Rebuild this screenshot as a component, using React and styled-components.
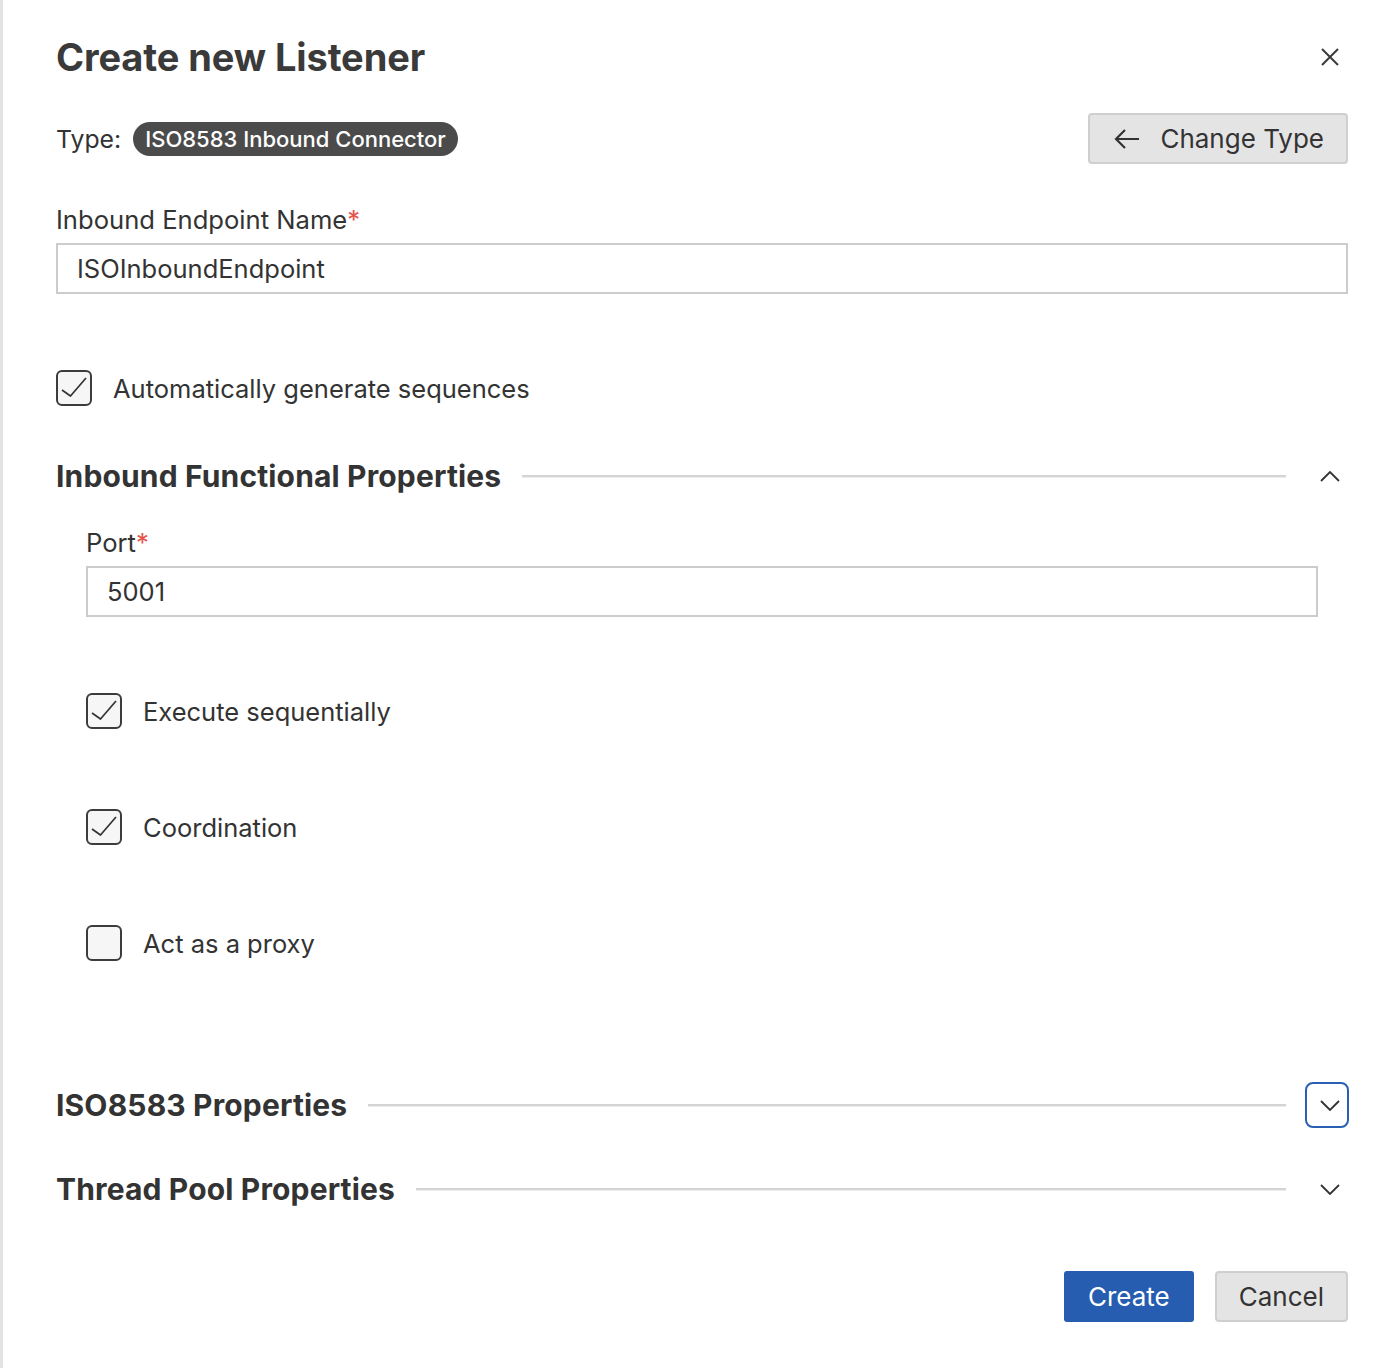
import React from "react";
import styled, { createGlobalStyle } from "styled-components";

const GlobalStyle = createGlobalStyle`
  html, body {
    margin: 0;
    padding: 0;
    background: #ffffff;
  }
  body {
    font-family: Inter, "Noto Sans", "Liberation Sans", sans-serif;
    color: #333333;
  }
  * {
    box-sizing: border-box;
  }
`;

function CloseIcon() {
  return (
    <svg width="20" height="20" viewBox="0 0 20 20" fill="none">
      <path d="M2 2 L18 18 M18 2 L2 18" stroke="#3a3a3a" strokeWidth="2" />
    </svg>
  );
}

function ArrowLeftIcon() {
  return (
    <svg width="26" height="22" viewBox="0 0 26 22" fill="none">
      <path
        d="M25 11 H2 M11 2 L2 11 L11 20"
        stroke="#333"
        strokeWidth="2.2"
        strokeLinejoin="miter"
      />
    </svg>
  );
}

function Chevron({ up }) {
  return (
    <svg width="20" height="11" viewBox="0 0 20 11" fill="none">
      <path
        d={up ? "M1 10 L10 1 L19 10" : "M1 1 L10 10 L19 1"}
        stroke="#333"
        strokeWidth="1.8"
      />
    </svg>
  );
}

function CheckMark() {
  return (
    <svg width="32" height="32" viewBox="0 0 32 32" fill="none">
      <path
        d="M4 18 L12.5 24 L28 6"
        stroke="#333"
        strokeWidth="1.7"
        strokeLinejoin="round"
      />
    </svg>
  );
}

function Checkbox({ label, checked, top }) {
  return (
    <CheckRow $top={top}>
      <Box>{checked && <CheckMark />}</Box>
      <CheckLabel>{label}</CheckLabel>
    </CheckRow>
  );
}

function Section({ title, open, focused, top, children }) {
  return (
    <>
      <SectionHeader $top={top}>
        <SectionTitle>{title}</SectionTitle>
        <Rule />
        <Toggle $focused={focused}>
          <Chevron up={open} />
        </Toggle>
      </SectionHeader>
      {open && <SectionBody>{children}</SectionBody>}
    </>
  );
}

function App() {
  return (
    <Panel>
      <GlobalStyle />
      <HeaderRow>
        <Title>Create new Listener</Title>
        <CloseButton>
          <CloseIcon />
        </CloseButton>
      </HeaderRow>

      <TypeRow>
        <TypeLabel>Type:</TypeLabel>
        <Chip>ISO8583 Inbound Connector</Chip>
        <Spacer />
        <SecondaryButton $wide>
          <ArrowLeftIcon />
          Change Type
        </SecondaryButton>
      </TypeRow>

      <Field $top={41}>
        <Label>
          Inbound Endpoint Name<Required>*</Required>
        </Label>
        <Input defaultValue="ISOInboundEndpoint" />
      </Field>

      <Checkbox label="Automatically generate sequences" checked top={76} />

      <Section title="Inbound Functional Properties" open top={47}>
        <Field $top={29}>
          <Label>
            Port<Required>*</Required>
          </Label>
          <Input defaultValue="5001" />
        </Field>
        <Checkbox label="Execute sequentially" checked top={76} />
        <Checkbox label="Coordination" checked top={80} />
        <Checkbox label="Act as a proxy" top={80} />
      </Section>

      <Section title="ISO8583 Properties" focused top={121} />
      <Section title="Thread Pool Properties" top={38} />

      <Footer>
        <PrimaryButton>Create</PrimaryButton>
        <SecondaryButton>Cancel</SecondaryButton>
      </Footer>
    </Panel>
  );
}

const Panel = styled.div`
  min-height: 1368px;
  border-left: 3px solid #e3e3e3;
  padding: 33px 44px 40px 53px;
  display: flex;
  flex-direction: column;
`;

const HeaderRow = styled.div`
  display: flex;
  align-items: center;
  justify-content: space-between;
  height: 48px;
`;

const Title = styled.h1`
  margin: 0;
  font-size: 38px;
  font-weight: 700;
  letter-spacing: -0.1px;
  color: #3a3a3a;
`;

const CloseButton = styled.div`
  width: 36px;
  height: 36px;
  display: flex;
  align-items: center;
  justify-content: center;
`;

const TypeRow = styled.div`
  display: flex;
  align-items: center;
  margin-top: 32px;
  height: 51px;
`;

const TypeLabel = styled.span`
  font-size: 24.8px;
  color: #333;
  margin-right: 12px;
`;

const Chip = styled.span`
  background: #4b4b4b;
  color: #ffffff;
  font-size: 22px;
  font-weight: 500;
  height: 34px;
  line-height: 34px;
  padding: 0 12px;
  border-radius: 17px;
`;

const Spacer = styled.div`
  flex: 1;
`;

const SecondaryButton = styled.button`
  display: flex;
  align-items: center;
  justify-content: center;
  gap: 20px;
  height: 51px;
  padding: ${(p) => (p.$wide ? "0 22px 0 24px" : "0 22px")};
  background: #e4e4e4;
  border: 2px solid #cfcfcf;
  border-radius: 4px;
  font-family: inherit;
  font-size: 26px;
  color: #333;
`;

const PrimaryButton = styled.button`
  height: 51px;
  padding: 0 24px;
  background: #275db0;
  border: none;
  border-radius: 3px;
  font-family: inherit;
  font-size: 26px;
  color: #ffffff;
`;

const Field = styled.div`
  display: flex;
  flex-direction: column;
  gap: 8px;
  margin-top: ${(p) => p.$top}px;
`;

const Label = styled.label`
  font-size: 25.6px;
  line-height: 30px;
  color: #333;
`;

const Required = styled.span`
  color: #e5534b;
`;

const Input = styled.input`
  height: 51px;
  width: 100%;
  border: 2px solid #cccccc;
  border-radius: 0;
  padding: 0 19px;
  font-family: inherit;
  font-size: 25.5px;
  color: #333;
  outline: none;
`;

const CheckRow = styled.div`
  display: flex;
  align-items: center;
  gap: 21px;
  height: 36px;
  margin-top: ${(p) => p.$top}px;
`;

const Box = styled.div`
  width: 36px;
  height: 36px;
  border: 2px solid #3c3c3c;
  border-radius: 6px;
  background: #f6f6f6;
  display: flex;
  align-items: center;
  justify-content: center;
`;

const CheckLabel = styled.span`
  font-size: 25.5px;
  color: #333;
`;

const SectionHeader = styled.div`
  display: flex;
  align-items: center;
  height: 46px;
  margin-top: ${(p) => p.$top}px;
`;

const SectionTitle = styled.h2`
  margin: 0;
  font-size: 30px;
  font-weight: 700;
  letter-spacing: 0.15px;
  color: #333;
  white-space: nowrap;
`;

const Rule = styled.div`
  flex: 1;
  height: 2px;
  margin: 0 0 0 21px;
  background: #d4d4d4;
  box-shadow: 0 1px 0 #ededed;
`;

const Toggle = styled.div`
  width: 44px;
  height: 46px;
  margin-left: 19px;
  margin-right: -1px;
  padding-right: 7px;
  display: flex;
  align-items: center;
  justify-content: flex-end;
  border: 2px solid ${(p) => (p.$focused ? "#2b5fb4" : "transparent")};
  border-radius: 8px;
`;

const SectionBody = styled.div`
  display: flex;
  flex-direction: column;
  padding-left: 30px;
  padding-right: 30px;
`;

const Footer = styled.div`
  display: flex;
  justify-content: flex-end;
  gap: 21px;
  margin-top: 59px;
`;

export default App;
